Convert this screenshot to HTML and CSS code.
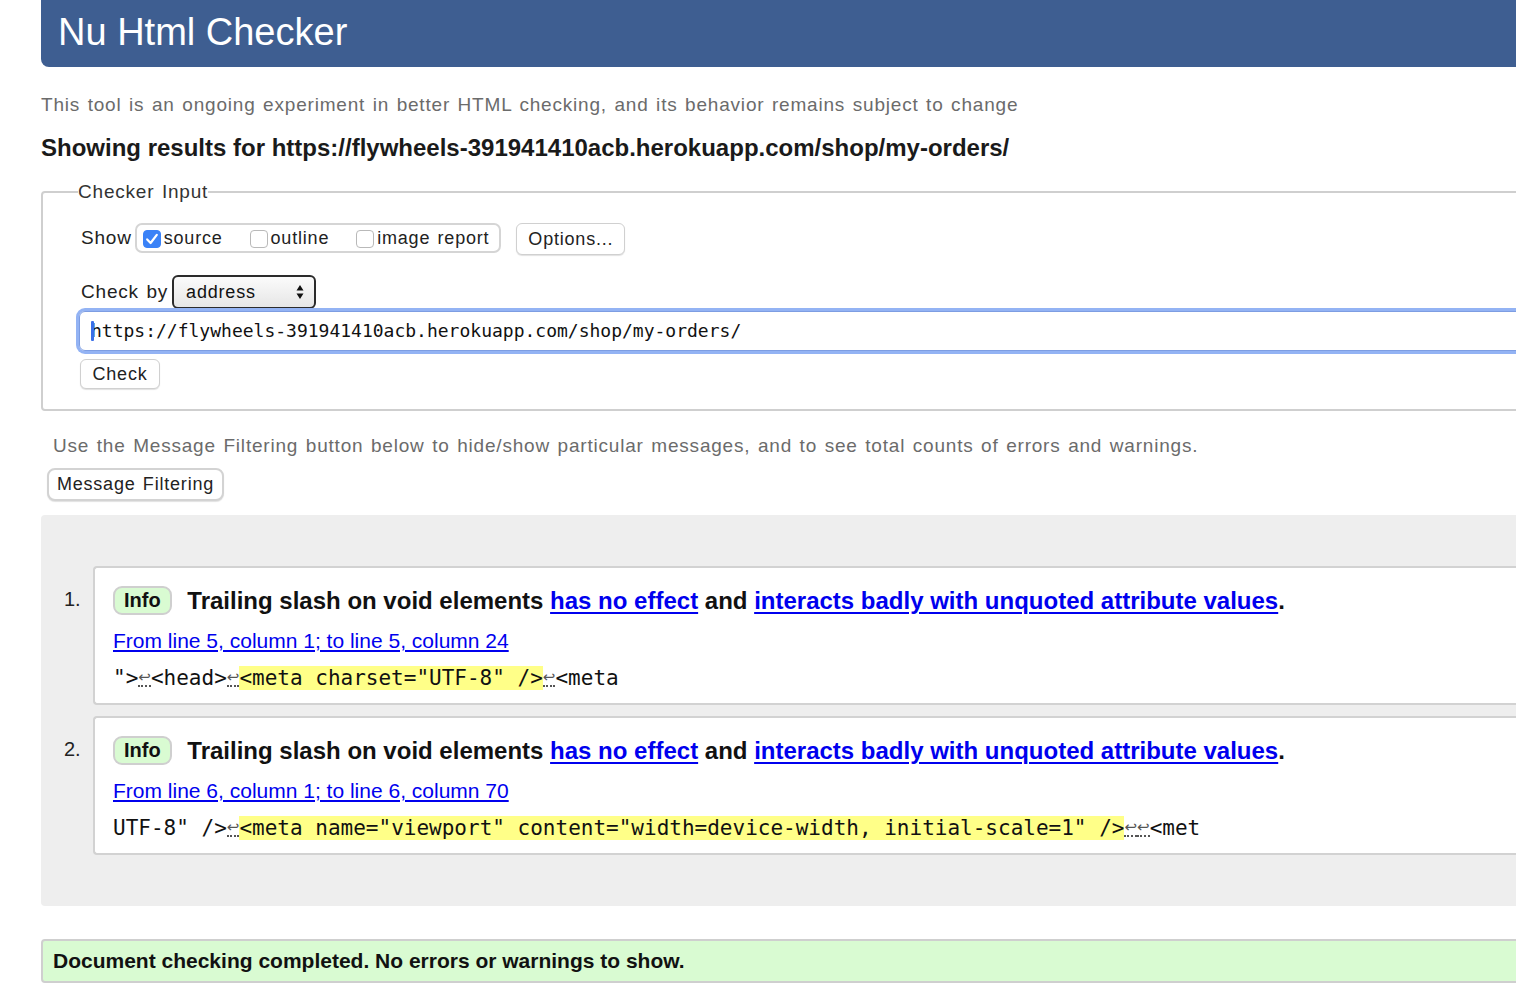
FILE: index.html
```html
<!DOCTYPE html>
<html lang="en">
<head>
<meta charset="utf-8">
<title>Nu Html Checker</title>
<link rel="stylesheet" href="styles.css">
</head>
<body>
<div class="page">
  <h1 class="banner">Nu Html Checker</h1>
  <p class="intro">This tool is an ongoing experiment in better HTML checking, and its behavior remains subject to change</p>
  <h2 class="showing">Showing results for https://flywheels-391941410acb.herokuapp.com/shop/my-orders/</h2>

  <fieldset class="input-box">
    <legend class="legend">Checker Input</legend>
    <div class="row show-row">
      <span class="label">Show</span>
      <span class="opts">
        <span class="opt"><span class="cb checked"><svg viewBox="0 0 18 18" width="18" height="18"><path d="M4.2 9.4 L7.6 13 L13.8 4.8" fill="none" stroke="#fff" stroke-width="2.2" stroke-linecap="round" stroke-linejoin="round"/></svg></span>source</span>
        <span class="opt"><span class="cb"></span>outline</span>
        <span class="opt"><span class="cb"></span>image report</span>
      </span>
      <span class="btn options">Options...</span>
    </div>
    <div class="row checkby-row">
      <span class="label">Check by</span>
      <span class="select">address<svg class="arrows" viewBox="0 0 8 16" width="8" height="16"><path d="M4 1 L7.5 6.5 L0.5 6.5 Z M4 15 L7.5 9.5 L0.5 9.5 Z" fill="#111"/></svg></span>
    </div>
    <div class="url"><span class="caret"></span>https://flywheels-391941410acb.herokuapp.com/shop/my-orders/</div>
    <span class="btn check">Check</span>
  </fieldset>

  <p class="filter-note">Use the Message Filtering button below to hide/show particular messages, and to see total counts of errors and warnings.</p>
  <span class="btn filter">Message Filtering</span>

  <ol class="results">
    <li class="msg">
      <span class="num">1.</span>
      <div class="card">
        <p class="msg-line"><span class="badge">Info</span> Trailing slash on void elements <a href="#">has no effect</a> and <a href="#">interacts badly with unquoted attribute values</a>.</p>
        <p class="loc"><a href="#">From line 5, column 1; to line 5, column 24</a></p>
        <p class="code">"&gt;<b class="lf">↩</b>&lt;head&gt;<b class="lf">↩</b><mark>&lt;meta charset="UTF-8" /&gt;</mark><b class="lf">↩</b>&lt;meta</p>
      </div>
    </li>
    <li class="msg">
      <span class="num">2.</span>
      <div class="card">
        <p class="msg-line"><span class="badge">Info</span> Trailing slash on void elements <a href="#">has no effect</a> and <a href="#">interacts badly with unquoted attribute values</a>.</p>
        <p class="loc"><a href="#">From line 6, column 1; to line 6, column 70</a></p>
        <p class="code">UTF-8" /&gt;<b class="lf">↩</b><mark>&lt;meta name="viewport" content="width=device-width, initial-scale=1" /&gt;</mark><b class="lf">↩</b><b class="lf">↩</b>&lt;met</p>
      </div>
    </li>
  </ol>

  <p class="done">Document checking completed. No errors or warnings to show.</p>
</div>
</body>
</html>
```
FILE: styles.css
```css
html { overflow: hidden; background: #fff; }
body {
  margin: 0;
  font-family: "Liberation Sans", Arial, sans-serif;
  color: #111;
}
.page {
  margin-left: 41px;
  width: 1560px;
}
.banner {
  margin: 0;
  height: 67px;
  box-sizing: border-box;
  padding: 7px 0 0 17px;
  background: #3e5e91;
  color: #fff;
  font-size: 38px;
  font-weight: normal;
  line-height: 50px;
  border-bottom-left-radius: 8px;
}
.intro, .legend, .label, .opt, .btn, .select, .filter-note {
  font-family: "Liberation Sans", Arial, sans-serif;
  letter-spacing: 0.8px;
  word-spacing: 1.5px;
}
.intro {
  margin: 25px 0 0;
  font-size: 19px;
  color: #6b6b6b;
  line-height: 26px;
}
.showing {
  margin: 16px 0 0;
  font-size: 24px;
  font-weight: bold;
  color: #1a1a1a;
  line-height: 28px;
}
.input-box {
  margin: 18px 0 0;
  border: 2px solid #cfcfcf;
  border-radius: 4px;
  padding: 0 0 20px 38px;
  min-width: 0;
}
.legend {
  margin-left: -3px;
  padding: 0;
  font-size: 19px;
  color: #333;
  line-height: 24px;
}
.row {
  display: flex;
  align-items: center;
}
.label {
  font-size: 19px;
  color: #222;
  margin-right: 5px;
}
.show-row {
  margin-top: 19px;
  align-items: flex-start;
}
.show-row .label { line-height: 29px; }
.opts {
  display: flex;
  align-items: center;
  height: 30px;
  box-sizing: border-box;
  border: 2px solid #d5d5d5;
  border-radius: 7px;
  padding: 0 10px 0 6px;
  gap: 27px;
  margin-left: -2px;
}
.opt {
  display: flex;
  align-items: center;
  font-size: 18px;
  color: #222;
}
.cb {
  display: inline-block;
  width: 18px;
  height: 18px;
  box-sizing: border-box;
  border: 1px solid #b9b9b9;
  border-radius: 4px;
  background: #fff;
  margin: 2px 3px 0 0;
}
.cb.checked {
  background: #3a82f7;
  border-color: #3a82f7;
}
.cb svg { display: block; margin: -1px; }
.btn {
  display: inline-flex;
  align-items: center;
  justify-content: center;
  box-sizing: border-box;
  border: 1px solid #d0d0d0;
  border-radius: 6px;
  background: #fff;
  box-shadow: 0 1px 1px rgba(0,0,0,0.12);
  font-size: 18px;
  color: #222;
}
.options {
  width: 109px;
  height: 32px;
  margin-left: 15px;
}
.checkby-row { margin-top: 20px; }
.select {
  position: relative;
  display: inline-flex;
  align-items: center;
  width: 144px;
  height: 34px;
  box-sizing: border-box;
  border: 2px solid #2b2b2b;
  border-radius: 6px;
  background: linear-gradient(#fbfbfb, #e6e6e6);
  padding-left: 12px;
  font-size: 18px;
  color: #111;
  margin-left: -1px;
}
.arrows {
  position: absolute;
  right: 10px;
  top: 7px;
}
.url {
  position: relative;
  margin: 2px 0 0 -2px;
  height: 40px;
  box-sizing: border-box;
  border: 1px solid #7d9de2;
  box-shadow: 0 0 0 3px #93b3f4;
  border-radius: 6px;
  padding: 0 0 0 11px;
  font-family: "DejaVu Sans Mono", monospace;
  font-size: 18px;
  line-height: 38px;
  color: #111;
  display: flex;
  align-items: center;
}
.caret {
  display: inline-block;
  width: 3px;
  height: 20px;
  background: #3a6fe8;
  border-radius: 1px;
  margin-right: -3px;
  position: relative;
  z-index: 1;
}
.check {
  margin: 8px 0 0 -1px;
  width: 80px;
  height: 30px;
}
.filter-note {
  margin: 22px 0 0 12px;
  font-size: 19px;
  color: #6b6b6b;
  line-height: 26px;
}
.filter {
  margin: 9px 0 0 6px;
  width: 177px;
  height: 33px;
  border: 2px solid #d3d3d3;
  border-radius: 8px;
}
.results {
  list-style: none;
  margin: 14px 0 0;
  padding: 51px 0 51px;
  background: #eeeeee;
  border-radius: 4px;
  display: flex;
  flex-direction: column;
  gap: 11px;
}
.msg {
  display: flex;
  align-items: flex-start;
}
.num {
  width: 52px;
  box-sizing: border-box;
  padding: 22px 0 0 23px;
  font-size: 20px;
  color: #222;
}
.card {
  flex: 1;
  background: #fff;
  border: 2px solid #d2d2d2;
  border-right: none;
  border-radius: 4px 0 0 4px;
  padding: 18px 0 11px 18px;
}
.card p { margin: 0; }
.msg-line {
  font-size: 24px;
  font-weight: bold;
  line-height: 30px;
  color: #111;
}
.badge {
  display: inline-block;
  box-sizing: border-box;
  height: 29px;
  padding: 0 9px;
  margin-right: 9px;
  border: 2px solid #cfcfcf;
  border-radius: 9px;
  background: #d9fbd2;
  font-size: 20px;
  line-height: 25px;
  vertical-align: 2px;
}
a { color: #0000ee; }
.msg-line a { text-decoration-thickness: 2px; text-underline-offset: 3px; }
.loc {
  margin-top: 12px !important;
  font-size: 21px;
  line-height: 26px;
}
.loc a { text-underline-offset: 2px; }
.code {
  margin-top: 10px !important;
  font-family: "DejaVu Sans Mono", monospace;
  font-size: 21px;
  line-height: 28px;
  color: #111;
  white-space: pre;
}
mark {
  background: #ffff88;
  color: inherit;
}
.lf {
  display: inline-block;
  width: 12.64px;
  font-weight: normal;
  font-family: "DejaVu Sans", sans-serif;
  font-size: 15px;
  line-height: 16px;
  color: #555;
  text-align: center;
  border-bottom: 2px dotted #555;
  vertical-align: -2px;
  overflow: hidden;
}
.done {
  margin: 33px 0 0;
  height: 44px;
  box-sizing: border-box;
  border: 2px solid #cfcfcf;
  border-radius: 4px;
  background: #d9fbd2;
  padding: 0 0 0 10px;
  font-size: 21px;
  font-weight: bold;
  line-height: 40px;
  color: #111;
}
```
